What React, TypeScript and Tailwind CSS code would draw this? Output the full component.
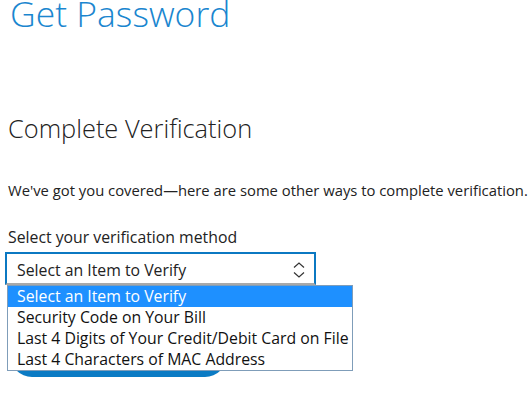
const options = [
  "Select an Item to Verify",
  "Security Code on Your Bill",
  "Last 4 Digits of Your Credit/Debit Card on File",
  "Last 4 Characters of MAC Address",
];

function Chevrons() {
  return (
    <svg width="14" height="20" viewBox="0 0 14 20" fill="none" stroke="#333" strokeWidth="1.2">
      <path d="M2 7.5 L7 3 L12 7.5" />
      <path d="M2 12.5 L7 17 L12 12.5" />
    </svg>
  );
}

export default function App() {
  return (
    <div className="h-[418px] w-[532px] overflow-hidden bg-white pl-2 font-['Open_Sans',sans-serif] text-[#222]">
      <h1 className="-mt-[5px] pl-[2px] text-[35.5px] font-light leading-[36px] text-[#1a86cf]">Get Password</h1>

      <h2 className="mt-[83px] text-[25.4px] font-light leading-[28px] text-[#222]">Complete Verification</h2>

      <p className="mt-[38px] whitespace-nowrap text-[14.8px] leading-[20px]">
        We've got you covered—here are some other ways to complete verification.
      </p>

      <label className="mt-[27px] block text-[15.8px] leading-[20px]">Select your verification method</label>

      <div className="relative mt-[5px]">
        <div className="-ml-[3px] flex h-[33px] w-[311px] items-center justify-between border-2 border-[#0b78c2] border-b-[#a9a9a9] bg-white pl-[10px] pr-[8px] pt-[2px]">
          <span className="text-[15.8px] leading-[20px]">Select an Item to Verify</span>
          <Chevrons />
        </div>

        <button className="mt-[16px] ml-[2px] h-[76px] w-[217px] rounded-[22px] bg-[#0b7bc4]" />

        <ul className="absolute left-[-1px] top-[33px] w-[346px] border border-[#7f9db9] bg-white">
          {options.map((opt, i) => (
            <li
              key={opt}
              className={
                i === 0
                  ? "h-[21px] whitespace-nowrap bg-[#1e90ff] pl-[9px] text-[15.8px] leading-[21px] text-white"
                  : "h-[21px] whitespace-nowrap pl-[9px] text-[15.8px] leading-[21px] text-[#111]"
              }
            >
              {opt}
            </li>
          ))}
        </ul>
      </div>
    </div>
  );
}
